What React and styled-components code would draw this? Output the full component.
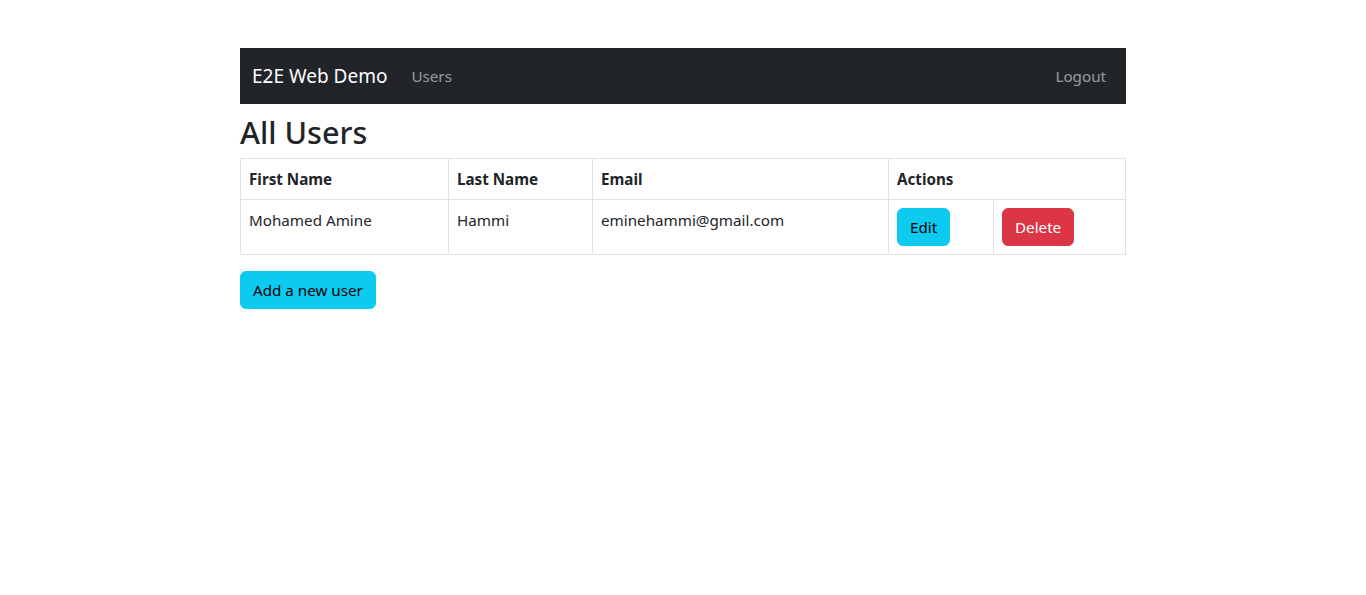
import React from "react";
import styled, { createGlobalStyle } from "styled-components";

const Global = createGlobalStyle`
  html, body { margin: 0; padding: 0; background: #fff; }
  body {
    font-family: "Noto Sans", "Open Sans", "Liberation Sans", sans-serif;
    font-size: 15.2px;
    line-height: 24px;
    color: #212529;
  }
  * { box-sizing: border-box; }
`;

const Container = styled.div`
  width: 886px;
  margin: 48px auto 0;
`;

const Navbar = styled.nav`
  height: 56px;
  background: #212529;
  display: flex;
  align-items: center;
  padding: 0 12px;
`;

const Brand = styled.a`
  font-size: 19px;
  color: #fff;
  margin-right: 16px;
  text-decoration: none;
  line-height: 30px;
`;

const NavLink = styled.a`
  color: rgba(255, 255, 255, 0.55);
  padding: 8px;
  text-decoration: none;
  margin-left: ${(p) => (p.$push ? "auto" : "0")};
`;

const Title = styled.h2`
  font-size: 30.6px;
  font-weight: 500;
  line-height: 38px;
  margin: 9px 0 7px;
`;

const Table = styled.table`
  width: 885px;
  border-collapse: collapse;
  margin-bottom: 16px;
  table-layout: fixed;
`;

const Th = styled.th`
  border: 1px solid #dee2e6;
  padding: 8px;
  text-align: left;
  font-weight: 700;
  vertical-align: top;
`;

const Td = styled.td`
  border: 1px solid #dee2e6;
  padding: 8px;
  vertical-align: top;
`;

const Button = styled.button`
  font-family: inherit;
  font-size: 15.2px;
  line-height: 24px;
  padding: 6px 12px;
  border-radius: 6px;
  border: 1px solid ${(p) => (p.$variant === "danger" ? "#dc3545" : "#0dcaf0")};
  background: ${(p) => (p.$variant === "danger" ? "#dc3545" : "#0dcaf0")};
  color: ${(p) => (p.$variant === "danger" ? "#fff" : "#000")};
  cursor: pointer;
`;

export default function App() {
  return (
    <>
      <Global />
      <Container>
        <Navbar>
          <Brand href="#">E2E Web Demo</Brand>
          <NavLink href="#">Users</NavLink>
          <NavLink href="#" $push>Logout</NavLink>
        </Navbar>
        <Title>All Users</Title>
        <Table>
          <colgroup>
            <col style={{ width: 208 }} />
            <col style={{ width: 144 }} />
            <col style={{ width: 296 }} />
            <col style={{ width: 105 }} />
            <col style={{ width: 132 }} />
          </colgroup>
          <thead>
            <tr>
              <Th>First Name</Th>
              <Th>Last Name</Th>
              <Th>Email</Th>
              <Th colSpan={2}>Actions</Th>
            </tr>
          </thead>
          <tbody>
            <tr>
              <Td>Mohamed Amine</Td>
              <Td>Hammi</Td>
              <Td>eminehammi@gmail.com</Td>
              <Td><Button>Edit</Button></Td>
              <Td><Button $variant="danger">Delete</Button></Td>
            </tr>
          </tbody>
        </Table>
        <Button>Add a new user</Button>
      </Container>
    </>
  );
}
